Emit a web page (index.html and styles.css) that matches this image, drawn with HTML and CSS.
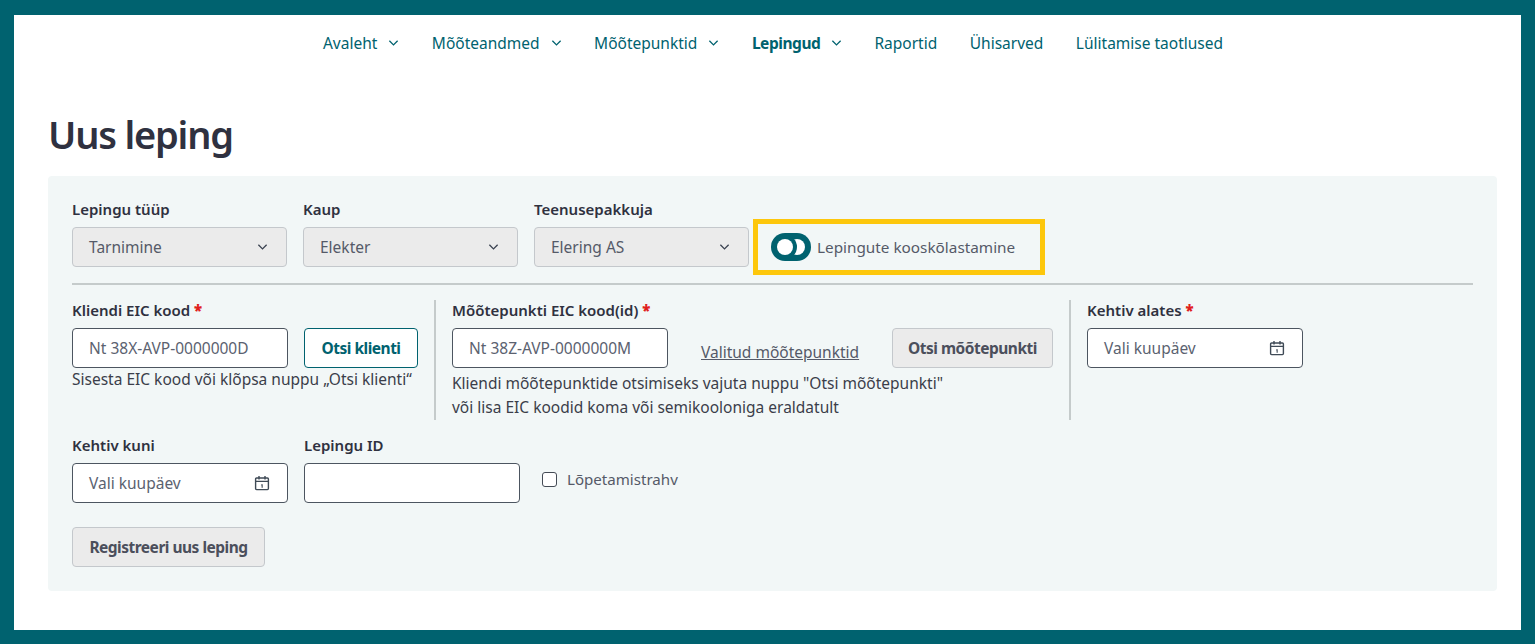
FILE: index.html
```html
<!DOCTYPE html>
<html lang="en">
<head>
    <meta charset="UTF-8">
    <meta name="viewport" content="width=device-width, initial-scale=1.0">
    <title>Uus leping</title>

    <link rel="stylesheet" href="styles.css">

</head>
<body>

    <svg class="icon-defs" width="0" height="0">
        <symbol id="chev" viewBox="0 0 12 8">
            <path d="M1.5 1.5 6 6l4.5-4.5" fill="none" stroke="currentColor" stroke-width="1.4"/>
        </symbol>
        <symbol id="cal" viewBox="0 0 16 16">
            <path d="M2.6 3h10.8a1 1 0 0 1 1 1v9.6a1 1 0 0 1-1 1H2.6a1 1 0 0 1-1-1V4a1 1 0 0 1 1-1zM1.6 6.4h12.8M5 1v3.4M11 1v3.4" fill="none" stroke="currentColor" stroke-width="1.4"/>
            <path d="M7.4 9.2h1.3v3.6H7.6v-2.5l-.7.2z" fill="currentColor"/>
        </symbol>
    </svg>

    <div class="frame">

        <nav class="nav">
            <a href="#">Avaleht <svg class="chev"><use href="#chev"/></svg></a>
            <a href="#">Mõõteandmed <svg class="chev"><use href="#chev"/></svg></a>
            <a href="#">Mõõtepunktid <svg class="chev"><use href="#chev"/></svg></a>
            <a href="#" class="active">Lepingud <svg class="chev"><use href="#chev"/></svg></a>
            <a href="#">Raportid</a>
            <a href="#">Ühisarved</a>
            <a href="#">Lülitamise taotlused</a>
        </nav>

        <h1>Uus leping</h1>

        <form class="panel">

            <div class="row row-top">
                <div class="field">
                    <label>Lepingu tüüp</label>
                    <div class="select"><span>Tarnimine</span><svg class="chev"><use href="#chev"/></svg></div>
                </div>
                <div class="field">
                    <label>Kaup</label>
                    <div class="select"><span>Elekter</span><svg class="chev"><use href="#chev"/></svg></div>
                </div>
                <div class="field">
                    <label>Teenusepakkuja</label>
                    <div class="select"><span>Elering AS</span><svg class="chev"><use href="#chev"/></svg></div>
                </div>
                <div class="toggle-box">
                    <svg class="toggle" viewBox="0 0 40 28">
                        <rect width="40" height="28" rx="14" fill="#00626f"/>
                        <circle cx="26" cy="14" r="8" fill="#fff"/>
                        <circle cx="14" cy="14" r="12" fill="#00626f"/>
                        <circle cx="14" cy="14" r="8" fill="#fff"/>
                    </svg>
                    <span>Lepingute kooskõlastamine</span>
                </div>
            </div>

            <div class="row-mid">
                <div class="col col-client">
                    <label>Kliendi EIC kood <b class="req">*</b></label>
                    <div class="line">
                        <div class="input">Nt 38X-AVP-0000000D</div>
                        <button type="button" class="btn btn-outline">Otsi klienti</button>
                    </div>
                    <p class="hint">Sisesta EIC kood või klõpsa nuppu „Otsi klienti“</p>
                </div>
                <div class="col col-point">
                    <label>Mõõtepunkti EIC kood(id) <b class="req">*</b></label>
                    <div class="line">
                        <div class="input">Nt 38Z-AVP-0000000M</div>
                        <a href="#" class="link">Valitud mõõtepunktid</a>
                        <button type="button" class="btn">Otsi mõõtepunkti</button>
                    </div>
                    <p class="hint hint-tall">Kliendi mõõtepunktide otsimiseks vajuta nuppu "Otsi mõõtepunkti"<br>või lisa EIC koodid koma või semikooloniga eraldatult</p>
                </div>
                <div class="col col-date">
                    <label>Kehtiv alates <b class="req">*</b></label>
                    <div class="input input-date">Vali kuupäev <svg class="cal"><use href="#cal"/></svg></div>
                </div>
            </div>

            <div class="row row-bottom">
                <div class="field">
                    <label>Kehtiv kuni</label>
                    <div class="input input-date">Vali kuupäev <svg class="cal"><use href="#cal"/></svg></div>
                </div>
                <div class="field">
                    <label>Lepingu ID</label>
                    <div class="input"></div>
                </div>
                <div class="check">
                    <span class="box"></span>
                    <span>Lõpetamistrahv</span>
                </div>
            </div>

            <button type="button" class="btn btn-submit">Registreeri uus leping</button>

        </form>

    </div>

</body>
</html>
```

FILE: styles.css
```css
* {
    box-sizing: border-box;
}

body {
    margin: 0;
    font-family: "Noto Sans", sans-serif;
    font-size: 15.5px;
    color: #2f3140;
    background-color: #fff;
}

.icon-defs {
    display: block;
}

.frame {
    height: 644px;
    overflow: hidden;
    border: 14px solid #00626f;
    border-top-width: 15px;
    padding: 0 24px 0 34px;
    background-color: #fff;
}

.nav {
    display: flex;
    justify-content: center;
    gap: 32.5px;
    height: 56px;
    padding: 18px 0 0 1px;
    line-height: 20px;
}

.nav a {
    color: #00626f;
    text-decoration: none;
    white-space: nowrap;
}

.nav .active {
    font-weight: 700;
    letter-spacing: -0.45px;
}

.chev {
    width: 11px;
    height: 8px;
    margin-left: 7px;
    vertical-align: 2px;
}

h1 {
    margin: 0;
    height: 105px;
    padding-top: 38px;
    font-size: 38px;
    line-height: 50px;
    font-weight: 600;
    letter-spacing: -1.2px;
}

.panel {
    height: 415px;
    padding: 24px;
    border-radius: 4px;
    background-color: #f2f7f7;
}

label {
    display: block;
    height: 14px;
    margin-bottom: 12px;
    font-size: 15px;
    font-weight: 600;
    line-height: 16px;
    white-space: nowrap;
}

.req {
    color: #e0201b;
}

.row {
    display: flex;
    gap: 16px;
}

.row-top {
    height: 85px;
    border-bottom: 2px solid #c5cbcb;
    padding-top: 1px;
}

.field {
    width: 216px;
}

.row-top .field {
    width: 215px;
}

.select {
    display: flex;
    justify-content: space-between;
    align-items: center;
    height: 40px;
    padding: 0 18px 0 16px;
    border: 1px solid #c4c8cc;
    border-radius: 4px;
    background-color: #ebebeb;
    color: #555a68;
}

.select .chev {
    color: #3a4250;
}

.toggle-box {
    display: flex;
    align-items: center;
    gap: 6px;
    width: 292px;
    height: 56px;
    margin: 18px 0 0 -12px;
    padding-left: 13px;
    border: 5px solid #fdc70c;
    color: #555a68;
    font-size: 15.3px;
    white-space: nowrap;
}

.toggle {
    width: 40px;
    height: 28px;
}

.row-mid {
    display: flex;
    height: 120px;
    margin-top: 15px;
}

.col {
    padding-top: 2px;
}

.col-client {
    width: 364px;
    border-right: 2px solid #c5cbcb;
}

.col-point {
    width: 635px;
    padding-left: 16px;
    border-right: 2px solid #c5cbcb;
}

.col-date {
    padding-left: 16px;
}

.line {
    display: flex;
    align-items: flex-start;
}

.input {
    display: flex;
    align-items: center;
    width: 216px;
    height: 40px;
    padding: 0 16px;
    border: 1px solid #4c5560;
    border-radius: 4px;
    background-color: #fff;
    color: #5b6270;
    white-space: nowrap;
}

.input-date {
    justify-content: space-between;
    padding-right: 17px;
}

.cal {
    width: 16px;
    height: 16px;
    color: #3f4a56;
}

.btn {
    height: 40px;
    padding: 0;
    border: 1px solid #c4c8cc;
    border-radius: 4px;
    background-color: #ebebeb;
    color: #4b4f5c;
    font-family: inherit;
    font-size: 15.5px;
    font-weight: 700;
    letter-spacing: -0.5px;
    white-space: nowrap;
}

.btn-outline {
    width: 114px;
    margin-left: 16px;
    border-color: #00626f;
    background-color: #fff;
    color: #00626f;
}

.col-point .btn {
    width: 161px;
    margin-left: 34px;
}

.link {
    width: 157px;
    margin: 14px 0 0 33px;
    color: #555a68;
    line-height: 20px;
    white-space: nowrap;
}

.hint {
    margin: 1px 0 0;
    line-height: 20px;
    color: #3b3e4a;
    white-space: nowrap;
}

.hint-tall {
    margin-top: 3px;
    line-height: 24px;
}

.row-bottom {
    height: 66px;
    margin: 17px 0 24px;
}

.check {
    display: flex;
    align-items: center;
    gap: 10px;
    height: 40px;
    margin: 26px 0 0 6px;
    padding-bottom: 8px;
    color: #555a68;
    font-size: 15.1px;
}

.box {
    width: 15px;
    height: 15px;
    border: 1px solid #444b55;
    border-radius: 3px;
    background-color: #fff;
}

.btn-submit {
    width: 193px;
}
```
